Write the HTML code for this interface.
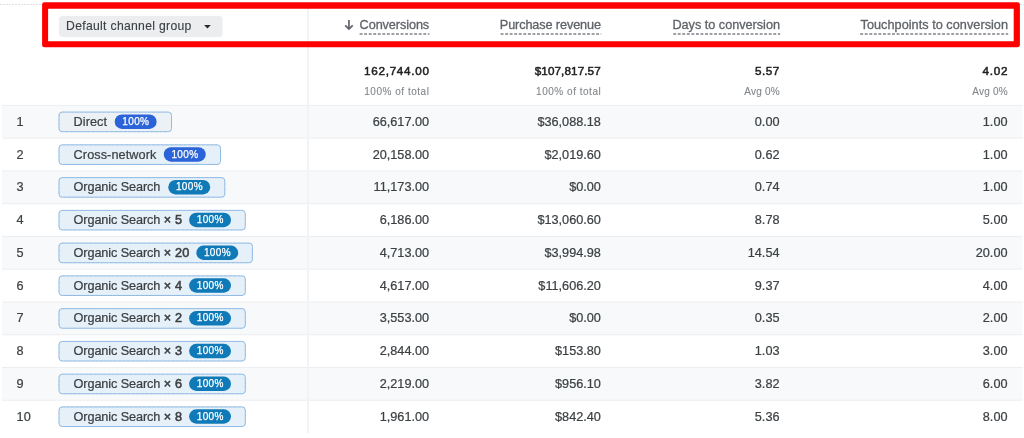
<!DOCTYPE html>
<html lang="en">
<head>
<meta charset="utf-8">
<title>Conversion paths</title>
<style>
*{box-sizing:border-box;margin:0;padding:0}
html,body{width:1024px;height:438px;overflow:hidden;background:#fff}
body{position:relative;font-family:"Liberation Sans",sans-serif;color:#3c4043;font-size:12.7px;letter-spacing:0;-webkit-text-stroke:.22px currentColor}
#wrap{position:absolute;left:0;top:0;width:1024px;height:438px;will-change:transform;transform:translateZ(0)}
#art{position:absolute;left:0;top:0}
.x{position:absolute;line-height:14px;height:14px;white-space:nowrap}
.r{text-align:right}
.idx{left:16.6px}
.lab{left:73.6px}
.lab b{font-weight:normal;-webkit-text-stroke:.55px currentColor;letter-spacing:.1px}
.bt{color:#fff;font-size:10px;font-weight:normal;letter-spacing:.35px;text-indent:.35px;text-align:center;width:41.9px;-webkit-text-stroke:.25px #fff}
.hdr{color:#5f6368;top:17.6px;-webkit-text-stroke:.3px currentColor}
.ddt{left:66.1px;top:18.6px;font-size:12.2px;letter-spacing:.3px;-webkit-text-stroke:.12px currentColor}
.tot{color:#202124;font-weight:normal;font-size:11.7px;top:64.4px;-webkit-text-stroke:.5px currentColor}
.sub{color:#80868b;font-size:10px;line-height:13px;height:13px;top:84.6px;-webkit-text-stroke:.1px currentColor}
</style>
</head>
<body>
<div id="wrap">
<svg id="art" width="1024" height="438" viewBox="0 0 1024 438">
<line x1="0" y1="4.5" x2="1024" y2="4.5" stroke="#dde1e6" stroke-width="1" stroke-dasharray="2 1"/>
<rect x="2" y="105.40" width="1020.5" height="32.76" fill="#f8f9fa"/>
<rect x="2" y="170.92" width="1020.5" height="32.76" fill="#f8f9fa"/>
<rect x="2" y="236.44" width="1020.5" height="32.76" fill="#f8f9fa"/>
<rect x="2" y="301.96" width="1020.5" height="32.76" fill="#f8f9fa"/>
<rect x="2" y="367.48" width="1020.5" height="32.76" fill="#f8f9fa"/>
<rect x="2" y="104.90" width="1020.5" height="1" fill="#eceef1"/>
<rect x="2" y="137.66" width="1020.5" height="1" fill="#eceef1"/>
<rect x="2" y="170.42" width="1020.5" height="1" fill="#eceef1"/>
<rect x="2" y="203.18" width="1020.5" height="1" fill="#eceef1"/>
<rect x="2" y="235.94" width="1020.5" height="1" fill="#eceef1"/>
<rect x="2" y="268.70" width="1020.5" height="1" fill="#eceef1"/>
<rect x="2" y="301.46" width="1020.5" height="1" fill="#eceef1"/>
<rect x="2" y="334.22" width="1020.5" height="1" fill="#eceef1"/>
<rect x="2" y="366.98" width="1020.5" height="1" fill="#eceef1"/>
<rect x="2" y="399.74" width="1020.5" height="1" fill="#eceef1"/>
<rect x="307" y="8" width="2" height="425" fill="#f1f3f6"/>
<rect x="59" y="16" width="163.5" height="21.1" rx="3.5" fill="#ebedef"/>
<path d="M204.1 25h6.7l-3.35 3.4z" fill="#26282b"/>
<line x1="359.6" y1="34.05" x2="429.4" y2="34.05" stroke="#7d8288" stroke-width="1.4" stroke-dasharray="2.9 1.65"/>
<line x1="500.6" y1="34.05" x2="601.2" y2="34.05" stroke="#7d8288" stroke-width="1.4" stroke-dasharray="2.9 1.65"/>
<line x1="673.2" y1="34.05" x2="780.2" y2="34.05" stroke="#7d8288" stroke-width="1.4" stroke-dasharray="2.9 1.65"/>
<line x1="860.2" y1="34.05" x2="1008.2" y2="34.05" stroke="#7d8288" stroke-width="1.4" stroke-dasharray="2.9 1.65"/>
<path d="M348.95 20.1v9.4M345.2 25.4l3.75 3.75l3.75-3.75" fill="none" stroke="#5f6368" stroke-width="1.7"/>
<rect x="59.00" y="112.08" width="112.50" height="19.60" rx="3.2" fill="#ecf1f6" stroke="#97bfe5" stroke-width="1"/>
<rect x="59.00" y="112.08" width="112.50" height="19.60" rx="3.2" fill="none" stroke="#7fb0dd" stroke-opacity=".28" stroke-width="1" stroke-dasharray="2.8 1.7"/>
<rect x="114.70" y="114.48" width="41.9" height="14.4" rx="7.2" fill="#2b63d9"/>
<rect x="59.00" y="144.84" width="161.50" height="19.60" rx="3.2" fill="#e6f0f9" stroke="#97bfe5" stroke-width="1"/>
<rect x="59.00" y="144.84" width="161.50" height="19.60" rx="3.2" fill="none" stroke="#7fb0dd" stroke-opacity=".28" stroke-width="1" stroke-dasharray="2.8 1.7"/>
<rect x="163.80" y="147.24" width="41.9" height="14.4" rx="7.2" fill="#2b63d9"/>
<rect x="59.00" y="177.60" width="165.80" height="19.60" rx="3.2" fill="#e6f0f9" stroke="#97bfe5" stroke-width="1"/>
<rect x="59.00" y="177.60" width="165.80" height="19.60" rx="3.2" fill="none" stroke="#7fb0dd" stroke-opacity=".28" stroke-width="1" stroke-dasharray="2.8 1.7"/>
<rect x="168.30" y="180.00" width="41.9" height="14.4" rx="7.2" fill="#0f7ab7"/>
<rect x="59.00" y="210.36" width="186.30" height="19.60" rx="3.2" fill="#e6f0f9" stroke="#97bfe5" stroke-width="1"/>
<rect x="59.00" y="210.36" width="186.30" height="19.60" rx="3.2" fill="none" stroke="#7fb0dd" stroke-opacity=".28" stroke-width="1" stroke-dasharray="2.8 1.7"/>
<rect x="189.10" y="212.76" width="41.9" height="14.4" rx="7.2" fill="#0f7ab7"/>
<rect x="59.00" y="243.12" width="193.40" height="19.60" rx="3.2" fill="#e6f0f9" stroke="#97bfe5" stroke-width="1"/>
<rect x="59.00" y="243.12" width="193.40" height="19.60" rx="3.2" fill="none" stroke="#7fb0dd" stroke-opacity=".28" stroke-width="1" stroke-dasharray="2.8 1.7"/>
<rect x="196.30" y="245.52" width="41.9" height="14.4" rx="7.2" fill="#0f7ab7"/>
<rect x="59.00" y="275.88" width="186.30" height="19.60" rx="3.2" fill="#e6f0f9" stroke="#97bfe5" stroke-width="1"/>
<rect x="59.00" y="275.88" width="186.30" height="19.60" rx="3.2" fill="none" stroke="#7fb0dd" stroke-opacity=".28" stroke-width="1" stroke-dasharray="2.8 1.7"/>
<rect x="189.10" y="278.28" width="41.9" height="14.4" rx="7.2" fill="#0f7ab7"/>
<rect x="59.00" y="308.64" width="186.30" height="19.60" rx="3.2" fill="#e6f0f9" stroke="#97bfe5" stroke-width="1"/>
<rect x="59.00" y="308.64" width="186.30" height="19.60" rx="3.2" fill="none" stroke="#7fb0dd" stroke-opacity=".28" stroke-width="1" stroke-dasharray="2.8 1.7"/>
<rect x="189.10" y="311.04" width="41.9" height="14.4" rx="7.2" fill="#0f7ab7"/>
<rect x="59.00" y="341.40" width="186.30" height="19.60" rx="3.2" fill="#e6f0f9" stroke="#97bfe5" stroke-width="1"/>
<rect x="59.00" y="341.40" width="186.30" height="19.60" rx="3.2" fill="none" stroke="#7fb0dd" stroke-opacity=".28" stroke-width="1" stroke-dasharray="2.8 1.7"/>
<rect x="189.10" y="343.80" width="41.9" height="14.4" rx="7.2" fill="#0f7ab7"/>
<rect x="59.00" y="374.16" width="186.30" height="19.60" rx="3.2" fill="#e6f0f9" stroke="#97bfe5" stroke-width="1"/>
<rect x="59.00" y="374.16" width="186.30" height="19.60" rx="3.2" fill="none" stroke="#7fb0dd" stroke-opacity=".28" stroke-width="1" stroke-dasharray="2.8 1.7"/>
<rect x="189.10" y="376.56" width="41.9" height="14.4" rx="7.2" fill="#0f7ab7"/>
<rect x="59.00" y="406.92" width="186.30" height="19.60" rx="3.2" fill="#e6f0f9" stroke="#97bfe5" stroke-width="1"/>
<rect x="59.00" y="406.92" width="186.30" height="19.60" rx="3.2" fill="none" stroke="#7fb0dd" stroke-opacity=".28" stroke-width="1" stroke-dasharray="2.8 1.7"/>
<rect x="189.10" y="409.32" width="41.9" height="14.4" rx="7.2" fill="#0f7ab7"/>
<path fill="#fe0000" fill-rule="evenodd" d="M44.4 2.25H1017.6a2.3 2.3 0 0 1 2.3 2.3V45.05a2.3 2.3 0 0 1 -2.3 2.3H44.4a2.3 2.3 0 0 1 -2.3 -2.3V4.55a2.3 2.3 0 0 1 2.3 -2.3zM48.1 8.75V41.2H1013.7V8.75z"/>
</svg>
<div class="x ddt">Default channel group</div>
<div class="x r hdr" id="h0" style="right:594.89px;letter-spacing:-0.09px">Conversions</div>
<div class="x r hdr" id="h1" style="right:423.12px;letter-spacing:-0.12px">Purchase revenue</div>
<div class="x r hdr" id="h2" style="right:244.02px;letter-spacing:-0.02px">Days to conversion</div>
<div class="x r hdr" id="h3" style="right:15.97px;letter-spacing:0.03px">Touchpoints to conversion</div>
<div class="x r tot" id="t0" style="right:594.40px;letter-spacing:0.7px">162,744.00</div>
<div class="x r sub" id="s0" style="right:594.58px;letter-spacing:0.52px">100% of total</div>
<div class="x r tot" id="t1" style="right:423.20px;letter-spacing:0.1px">$107,817.57</div>
<div class="x r sub" id="s1" style="right:422.78px;letter-spacing:0.52px">100% of total</div>
<div class="x r tot" id="t2" style="right:244.35px;letter-spacing:0.45px">5.57</div>
<div class="x r sub" id="s2" style="right:244.08px;letter-spacing:0.22px">Avg 0%</div>
<div class="x r tot" id="t3" style="right:15.75px;letter-spacing:0.75px">4.02</div>
<div class="x r sub" id="s3" style="right:16.08px;letter-spacing:0.22px">Avg 0%</div>
<div class="x idx" style="top:114.88px">1</div>
<div class="x lab" id="l0" style="top:114.88px;letter-spacing:0.05px">Direct</div>
<div class="x bt" style="top:114.78px;left:114.70px">100%</div>
<div class="x r" id="n0_0" style="top:114.88px;right:594.9px">66,617.00</div>
<div class="x r" id="n0_1" style="top:114.88px;right:423.1px">$36,088.18</div>
<div class="x r" id="n0_2" style="top:114.88px;right:244.5px">0.00</div>
<div class="x r" id="n0_3" style="top:114.88px;right:16.5px">1.00</div>
<div class="x idx" style="top:147.64px">2</div>
<div class="x lab" id="l1" style="top:147.64px;letter-spacing:0.08px">Cross-network</div>
<div class="x bt" style="top:147.54px;left:163.80px">100%</div>
<div class="x r" id="n1_0" style="top:147.64px;right:594.9px">20,158.00</div>
<div class="x r" id="n1_1" style="top:147.64px;right:423.1px">$2,019.60</div>
<div class="x r" id="n1_2" style="top:147.64px;right:244.5px">0.62</div>
<div class="x r" id="n1_3" style="top:147.64px;right:16.5px">1.00</div>
<div class="x idx" style="top:180.40px">3</div>
<div class="x lab" id="l2" style="top:180.40px;letter-spacing:-0.11px">Organic Search</div>
<div class="x bt" style="top:180.30px;left:168.30px">100%</div>
<div class="x r" id="n2_0" style="top:180.40px;right:594.9px">11,173.00</div>
<div class="x r" id="n2_1" style="top:180.40px;right:423.1px">$0.00</div>
<div class="x r" id="n2_2" style="top:180.40px;right:244.5px">0.74</div>
<div class="x r" id="n2_3" style="top:180.40px;right:16.5px">1.00</div>
<div class="x idx" style="top:213.16px">4</div>
<div class="x lab" id="l3" style="top:213.16px;letter-spacing:-0.11px">Organic Search<b> × 5</b></div>
<div class="x bt" style="top:213.06px;left:189.10px">100%</div>
<div class="x r" id="n3_0" style="top:213.16px;right:594.9px">6,186.00</div>
<div class="x r" id="n3_1" style="top:213.16px;right:423.1px">$13,060.60</div>
<div class="x r" id="n3_2" style="top:213.16px;right:244.5px">8.78</div>
<div class="x r" id="n3_3" style="top:213.16px;right:16.5px">5.00</div>
<div class="x idx" style="top:245.92px">5</div>
<div class="x lab" id="l4" style="top:245.92px;letter-spacing:-0.11px">Organic Search<b> × 20</b></div>
<div class="x bt" style="top:245.82px;left:196.30px">100%</div>
<div class="x r" id="n4_0" style="top:245.92px;right:594.9px">4,713.00</div>
<div class="x r" id="n4_1" style="top:245.92px;right:423.1px">$3,994.98</div>
<div class="x r" id="n4_2" style="top:245.92px;right:244.5px">14.54</div>
<div class="x r" id="n4_3" style="top:245.92px;right:16.5px">20.00</div>
<div class="x idx" style="top:278.68px">6</div>
<div class="x lab" id="l5" style="top:278.68px;letter-spacing:-0.11px">Organic Search<b> × 4</b></div>
<div class="x bt" style="top:278.58px;left:189.10px">100%</div>
<div class="x r" id="n5_0" style="top:278.68px;right:594.9px">4,617.00</div>
<div class="x r" id="n5_1" style="top:278.68px;right:423.1px">$11,606.20</div>
<div class="x r" id="n5_2" style="top:278.68px;right:244.5px">9.37</div>
<div class="x r" id="n5_3" style="top:278.68px;right:16.5px">4.00</div>
<div class="x idx" style="top:311.44px">7</div>
<div class="x lab" id="l6" style="top:311.44px;letter-spacing:-0.11px">Organic Search<b> × 2</b></div>
<div class="x bt" style="top:311.34px;left:189.10px">100%</div>
<div class="x r" id="n6_0" style="top:311.44px;right:594.9px">3,553.00</div>
<div class="x r" id="n6_1" style="top:311.44px;right:423.1px">$0.00</div>
<div class="x r" id="n6_2" style="top:311.44px;right:244.5px">0.35</div>
<div class="x r" id="n6_3" style="top:311.44px;right:16.5px">2.00</div>
<div class="x idx" style="top:344.20px">8</div>
<div class="x lab" id="l7" style="top:344.20px;letter-spacing:-0.11px">Organic Search<b> × 3</b></div>
<div class="x bt" style="top:344.10px;left:189.10px">100%</div>
<div class="x r" id="n7_0" style="top:344.20px;right:594.9px">2,844.00</div>
<div class="x r" id="n7_1" style="top:344.20px;right:423.1px">$153.80</div>
<div class="x r" id="n7_2" style="top:344.20px;right:244.5px">1.03</div>
<div class="x r" id="n7_3" style="top:344.20px;right:16.5px">3.00</div>
<div class="x idx" style="top:376.96px">9</div>
<div class="x lab" id="l8" style="top:376.96px;letter-spacing:-0.11px">Organic Search<b> × 6</b></div>
<div class="x bt" style="top:376.86px;left:189.10px">100%</div>
<div class="x r" id="n8_0" style="top:376.96px;right:594.9px">2,219.00</div>
<div class="x r" id="n8_1" style="top:376.96px;right:423.1px">$956.10</div>
<div class="x r" id="n8_2" style="top:376.96px;right:244.5px">3.82</div>
<div class="x r" id="n8_3" style="top:376.96px;right:16.5px">6.00</div>
<div class="x idx" style="top:409.72px">10</div>
<div class="x lab" id="l9" style="top:409.72px;letter-spacing:-0.11px">Organic Search<b> × 8</b></div>
<div class="x bt" style="top:409.62px;left:189.10px">100%</div>
<div class="x r" id="n9_0" style="top:409.72px;right:594.9px">1,961.00</div>
<div class="x r" id="n9_1" style="top:409.72px;right:423.1px">$842.40</div>
<div class="x r" id="n9_2" style="top:409.72px;right:244.5px">5.36</div>
<div class="x r" id="n9_3" style="top:409.72px;right:16.5px">8.00</div>
</div>
</body>
</html>
